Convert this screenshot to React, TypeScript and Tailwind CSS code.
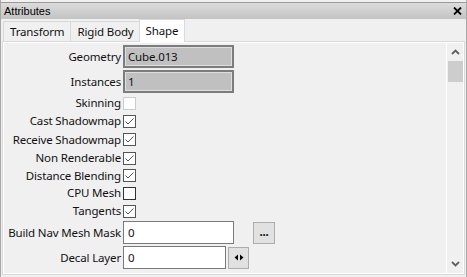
import React from "react";

// Attributes panel: title strip, tab row, property grid with a scroll bar.

const tabs = ["Transform", "Rigid Body", "Shape"];

type Row =
  | { kind: "readonly"; label: string; value: string }
  | { kind: "check"; label: string; checked: boolean; disabled?: boolean; h: string };

const rows: Row[] = [
  { kind: "readonly", label: "Geometry", value: "Cube.013" },
  { kind: "readonly", label: "Instances", value: "1" },
  { kind: "check", label: "Skinning", checked: false, disabled: true, h: "h-[18px]" },
  { kind: "check", label: "Cast Shadowmap", checked: true, h: "h-[18px]" },
  { kind: "check", label: "Receive Shadowmap", checked: true, h: "h-[19px]" },
  { kind: "check", label: "Non Renderable", checked: true, h: "h-[18px]" },
  { kind: "check", label: "Distance Blending", checked: true, h: "h-[17px]" },
  { kind: "check", label: "CPU Mesh", checked: false, h: "h-[18px]" },
  { kind: "check", label: "Tangents", checked: true, h: "h-[18px]" },
];

function CheckBox({ checked, disabled }: { checked: boolean; disabled?: boolean }) {
  return (
    <div
      className={`w-[13px] h-[13px] border bg-white ${
        disabled ? "border-[#cccccc]" : checked ? "border-[#555555]" : "border-[#333333]"
      }`}
    >
      {checked && (
        <svg width="11" height="11" viewBox="0 0 11 11">
          <path d="M1.5 5.5 L4 8 L9.5 2.5" fill="none" stroke="#555" strokeWidth="1" />
        </svg>
      )}
    </div>
  );
}

function Label({ children }: { children: React.ReactNode }) {
  return <div className="w-[117px] shrink-0 text-right whitespace-nowrap">{children}</div>;
}

function Chevron({ up }: { up?: boolean }) {
  return (
    <svg width="9" height="6" viewBox="0 0 9 6">
      <path
        d={up ? "M1 5 L4.5 1.5 L8 5" : "M1 1 L4.5 4.5 L8 1"}
        fill="none"
        stroke="#606060"
        strokeWidth="1.8"
      />
    </svg>
  );
}

export default function App() {
  return (
    <div className="w-[467px] h-[277px] bg-[#f0f0f0] text-[11.5px] tracking-[-0.15px] text-[#111] font-['Segoe_UI','Noto_Sans',sans-serif] flex flex-col border-l border-r border-[#a8a8a8] overflow-hidden">
      <div className="mt-[2px] h-[17px] border-t border-[#9a9a9a] bg-gradient-to-b from-[#dcdcdc] to-[#c3c3c3] flex items-center justify-between pl-[3px] pr-[4px]">
        <span className="text-[11px] tracking-normal font-['Liberation_Sans',Arial,sans-serif] text-black leading-none">
          Attributes
        </span>
        <svg width="9" height="8" viewBox="0 0 9 8">
          <path d="M1 0.5 L8 7.5 M8 0.5 L1 7.5" stroke="#000" strokeWidth="1.8" />
        </svg>
      </div>

      <div className="h-[23px] flex items-end pl-[2px]">
        {tabs.map((t) => {
          const sel = t === "Shape";
          return (
            <div
              key={t}
              className={
                sel
                  ? "h-[23px] px-[6px] bg-white border-t border-x border-[#d9d9d9] flex items-start pt-[2px] -ml-px relative z-10"
                  : "h-[21px] px-[6px] border-t border-l border-[#d9d9d9] flex items-center"
              }
            >
              {t}
            </div>
          );
        })}
        <div className="flex-1" />
      </div>

      <div className="flex-1 mx-[1px] mb-[2px] border border-[#d9d9d9] bg-white p-px flex -mt-px">
        <div className="flex-1 bg-[#f0f0f0] flex flex-col pt-px">
          {rows.map((r) =>
            r.kind === "readonly" ? (
              <div key={r.label} className="h-[25px] flex items-center gap-[2px]">
                <Label>{r.label}</Label>
                <div className="w-[111px] h-[23px] border-2 border-[#7c7c7c] bg-[#c0c0c0] flex items-center pl-[3px] shadow-[inset_0_0_0_1px_#dedede]">
                  {r.value}
                </div>
              </div>
            ) : (
              <div key={r.label} className={`${r.h} flex items-center gap-[2px]`}>
                <Label>{r.label}</Label>
                <CheckBox checked={r.checked} disabled={r.disabled} />
              </div>
            )
          )}
          <div className="h-[25px] flex items-center gap-[2px]">
            <Label>Build Nav Mesh Mask</Label>
            <div className="w-[111px] h-[23px] border border-[#7a7a7a] bg-white flex items-center pl-[4px]">
              0
            </div>
            <div className="ml-[17px] w-[22px] h-[22px] border border-[#adadad] bg-[#e1e1e1] flex items-center justify-center font-bold leading-none pb-[2px]">
              ...
            </div>
          </div>
          <div className="h-[25px] flex items-center gap-[2px]">
            <Label>Decal Layer</Label>
            <div className="w-[103px] h-[23px] border border-[#7a7a7a] bg-white flex items-center pl-[4px]">
              0
            </div>
            <div className="w-[21px] h-[22px] border border-[#adadad] bg-[#e1e1e1] flex items-center justify-center">
              <svg width="10" height="7" viewBox="0 0 10 7">
                <path d="M4 0.5 L0.5 3.5 L4 6.5 Z M6 0.5 L9.5 3.5 L6 6.5 Z" fill="#000" />
              </svg>
            </div>
          </div>
        </div>
        <div className="w-[17px] bg-[#f0f0f0] border-l border-white flex flex-col items-center">
          <div className="h-[18px] flex items-center justify-center">
            <Chevron up />
          </div>
          <div className="w-[15px] h-[21px] bg-[#cdcdcd]" />
          <div className="flex-1" />
          <div className="h-[18px] flex items-center justify-center">
            <Chevron />
          </div>
        </div>
      </div>
    </div>
  );
}
